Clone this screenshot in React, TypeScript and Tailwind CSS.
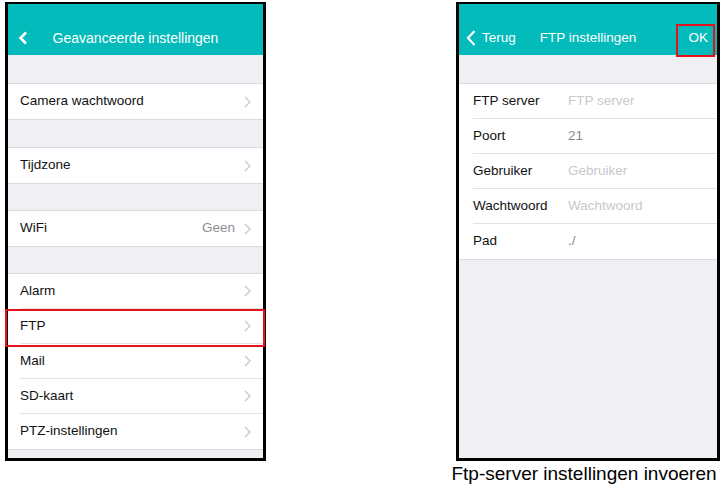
import React from "react";

const font = { fontFamily: '"Liberation Sans", Arial, sans-serif' };

const Chevron = () => (
  <svg width="7" height="12" viewBox="0 0 7 12" className="shrink-0">
    <polyline points="1,1 6,6 1,11" fill="none" stroke="#c7c7cc" strokeWidth="1.3" />
  </svg>
);

type Item = { label: string; value?: string };

const Group = ({ items }: { items: Item[] }) => (
  <div className="bg-white border-y border-[#dcdce0]">
    {items.map((it, i) => (
      <div key={it.label} className="pl-3 h-[35px]">
        <div
          className={
            "flex items-center h-full pr-3 " +
            (i < items.length - 1 ? "border-b border-[#e2e2e6]" : "")
          }
        >
          <span className="flex-1 text-[13.5px] text-[#111]">{it.label}</span>
          {it.value && <span className="text-[13.5px] text-[#8e8e93] mr-[9px]">{it.value}</span>}
          <Chevron />
        </div>
      </div>
    ))}
  </div>
);

const LeftPhone = () => (
  <div className="w-[261px] h-[459px] border-[3px] border-black border-t-2 bg-[#efeff4] flex flex-col">
    <div className="h-[51px] bg-[#03bbbb] relative flex items-end justify-center pb-[9px]">
      <svg width="10" height="14" viewBox="0 0 10 14" className="absolute left-[10px] top-[27px]">
        <polyline points="8,1.5 2.5,7 8,12.5" fill="none" stroke="white" strokeWidth="2.6" />
      </svg>
      <span className="text-white text-[14px] leading-4">Geavanceerde instellingen</span>
    </div>
    <div className="h-[28px]" />
    <Group items={[{ label: "Camera wachtwoord" }]} />
    <div className="h-[27px]" />
    <Group items={[{ label: "Tijdzone" }]} />
    <div className="h-[26px]" />
    <Group items={[{ label: "WiFi", value: "Geen" }]} />
    <div className="h-[26px]" />
    <Group
      items={[
        { label: "Alarm" },
        { label: "FTP" },
        { label: "Mail" },
        { label: "SD-kaart" },
        { label: "PTZ-instellingen" },
      ]}
    />
  </div>
);

const fields = [
  { label: "FTP server", value: "FTP server", placeholder: true },
  { label: "Poort", value: "21", placeholder: false },
  { label: "Gebruiker", value: "Gebruiker", placeholder: true },
  { label: "Wachtwoord", value: "Wachtwoord", placeholder: true },
  { label: "Pad", value: "./", placeholder: false },
];

const RightPhone = () => (
  <div className="w-[264px] h-[459px] border-[3px] border-t-2 border-black bg-[#efeff4] flex flex-col">
    <div className="h-[51px] bg-[#03bbbb] relative flex items-end justify-center pb-[9px] text-white">
      <div className="absolute left-[7px] top-[26px] flex items-center gap-[6px]">
        <svg width="10" height="16" viewBox="0 0 10 16">
          <polyline points="8.5,1 2,8 8.5,15" fill="none" stroke="white" strokeWidth="2.2" />
        </svg>
        <span className="text-[13.5px] leading-none">Terug</span>
      </div>
      <span className="text-[13.5px] leading-4">FTP instellingen</span>
      <span className="absolute right-[9px] bottom-[9px] text-[13.5px] leading-4">OK</span>
    </div>
    <div className="h-[28px]" />
    <div className="bg-white border-y border-[#dcdce0]">
      {fields.map((f, i) => (
        <div key={f.label} className="pl-[14px] h-[35px]">
          <div
            className={
              "flex items-center h-full " + (i < fields.length - 1 ? "border-b border-[#e2e2e6]" : "")
            }
          >
            <span className="w-[95px] text-[13.5px] text-[#111]">{f.label}</span>
            <span className={"text-[13.5px] " + (f.placeholder ? "text-[#c8c8cd]" : "text-[#8a8a8f]")}>
              {f.value}
            </span>
          </div>
        </div>
      ))}
    </div>
  </div>
);

export default function App() {
  return (
    <div className="relative w-[722px] h-[490px] bg-white flex" style={font}>
      <div className="ml-[5px] mt-[2px]">
        <LeftPhone />
      </div>
      <div className="ml-auto mr-[2px] mt-[2px] flex flex-col items-center">
        <RightPhone />
        <div className="mt-[2px] text-[19px] text-black leading-[22px] -ml-[8px]">
          Ftp-server instellingen invoeren
        </div>
      </div>
      <div className="absolute left-[5px] top-[309px] w-[260px] h-[38px] border-2 border-[#e8101a]" />
      <div className="absolute left-[676px] top-[24px] w-[39px] h-[33px] border-2 border-[#e8101a]" />
    </div>
  );
}
